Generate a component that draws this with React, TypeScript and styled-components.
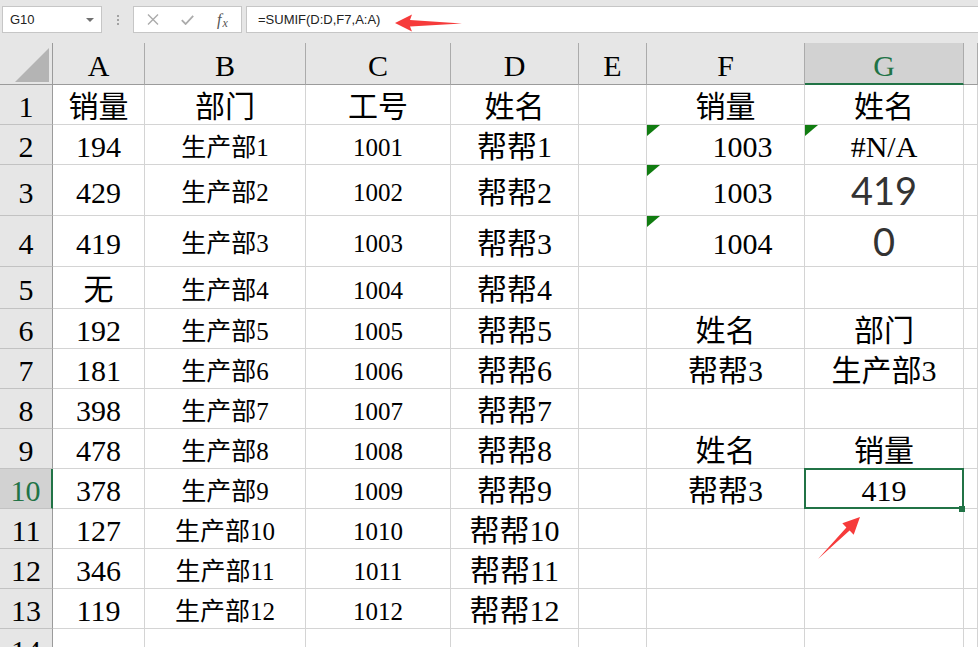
import React from "react";
import styled, { createGlobalStyle, css } from "styled-components";

const GREEN = "#217346";

const Global = createGlobalStyle`
  html, body { margin: 0; padding: 0; background: #fff; overflow: hidden; }
  #root { width: 978px; height: 647px; }
`;

const Page = styled.div`
  position: relative;
  width: 978px;
  height: 647px;
  overflow: hidden;
  background: #fff;
  font-family: "Liberation Serif", "Noto Sans CJK SC", serif;
`;

/* ---------- formula bar ---------- */
const TopBar = styled.div`
  height: 43px;
  box-sizing: border-box;
  background: #e6e6e6;
  display: flex;
  align-items: flex-start;
  padding: 6px 0 0 2px;
  font-family: "Liberation Sans", "Noto Sans CJK SC", sans-serif;
  font-size: 13px;
  color: #222;
`;

const Box = styled.div`
  height: 27px;
  box-sizing: border-box;
  background: #fff;
  border: 1px solid #c6c6c6;
  display: flex;
  align-items: center;
`;

const NameBox = styled(Box)`
  width: 100px;
  padding: 0 7px 0 7px;
  justify-content: space-between;
`;

const Caret = styled.span`
  width: 0;
  height: 0;
  border-left: 4px solid transparent;
  border-right: 4px solid transparent;
  border-top: 4px solid #707070;
  margin-top: 1px;
`;

const Dots = styled.div`
  width: 31px;
  height: 27px;
  display: flex;
  flex-direction: column;
  align-items: center;
  justify-content: center;
  gap: 2px;
`;

const Dot = styled.span`
  width: 2px;
  height: 2px;
  background: #a2a2a2;
`;

const FxBox = styled(Box)`
  width: 109px;
  padding-left: 1px;
`;

const FxSlot = styled.div`
  width: 36px;
  height: 100%;
  display: flex;
  align-items: center;
  justify-content: center;
`;

const FxText = styled.span`
  font-family: "Liberation Serif", serif;
  font-style: italic;
  color: #555;
  font-size: 16px;
  line-height: 1;
  margin-left: -2px;
  & > span {
    font-size: 12px;
    position: relative;
    top: 2px;
    margin-left: 1px;
  }
`;

const FormulaBox = styled(Box)`
  flex: 1;
  margin-left: 4px;
  margin-right: -2px;
  padding-left: 11px;
  color: #222;
`;

/* ---------- sheet ---------- */
const ROW_HEIGHTS = [42, 40, 40, 51, 51, 42, 40, 40, 40, 40, 40, 40, 40, 40, 40];

const Sheet = styled.div`
  display: grid;
  grid-template-columns: 53px 92px 161px 145px 128px 68px 158px 159px 1fr;
  grid-template-rows: ${ROW_HEIGHTS.map((h) => `${h}px`).join(" ")};
`;

const Corner = styled.div`
  box-sizing: border-box;
  background: #e6e6e6;
  border-right: 1px solid #9b9b9b;
  border-bottom: 1px solid #9b9b9b;
  & > svg { display: block; }
`;

const ColHead = styled.div<{ $active?: boolean }>`
  box-sizing: border-box;
  background: ${(p) => (p.$active ? "#d2d2d2" : "#e6e6e6")};
  border-right: 1px solid #ababab;
  border-bottom: ${(p) => (p.$active ? `2px solid ${GREEN}` : "1px solid #9b9b9b")};
  color: ${(p) => (p.$active ? GREEN : "#000")};
  display: flex;
  align-items: center;
  justify-content: center;
  padding-top: ${(p) => (p.$active ? 6 : 5)}px;
  font-size: 30px;
  line-height: 1;
`;

const RowHead = styled.div<{ $active?: boolean }>`
  box-sizing: border-box;
  background: ${(p) => (p.$active ? "#d2d2d2" : "#e6e6e6")};
  border-right: ${(p) => (p.$active ? `2px solid ${GREEN}` : "1px solid #9b9b9b")};
  border-bottom: 1px solid #c2c2c2;
  color: ${(p) => (p.$active ? GREEN : "#000")};
  display: flex;
  align-items: center;
  justify-content: center;
  padding-top: 5px;
  font-size: 30px;
  line-height: 1;
  white-space: nowrap;
`;

const Cell = styled.div<{ $size: number; $sans?: boolean; $indent?: number; $selected?: boolean }>`
  position: relative;
  box-sizing: border-box;
  border-right: 1px solid #d4d4d4;
  border-bottom: 1px solid #d4d4d4;
  display: flex;
  align-items: center;
  justify-content: center;
  padding-top: ${(p) => (p.$sans ? 0 : 5)}px;
  padding-left: ${(p) => p.$indent ?? 0}px;
  font-size: ${(p) => p.$size}px;
  line-height: 1;
  white-space: nowrap;
  color: #000;
  ${(p) =>
    p.$sans &&
    css`
      font-family: Lato, "Liberation Sans", sans-serif;
      font-size: 38px;
      color: #333;
    `}
  ${(p) =>
    p.$selected &&
    css`
      &::after {
        content: "";
        position: absolute;
        top: -1px;
        left: -1px;
        right: -1px;
        bottom: -1px;
        border: 2px solid ${GREEN};
        pointer-events: none;
      }
    `}
`;

const Handle = styled.span`
  position: absolute;
  right: -2px;
  bottom: -4px;
  width: 6px;
  height: 6px;
  background: ${GREEN};
  z-index: 2;
`;

const ErrorMark = styled.span`
  position: absolute;
  top: 0;
  left: 0;
  width: 0;
  height: 0;
  border-top: 11px solid #107c10;
  border-right: 13px solid transparent;
`;

const Annotations = styled.svg`
  position: absolute;
  top: 0;
  left: 0;
  pointer-events: none;
  z-index: 5;
`;

/* ---------- data ---------- */
type Spec = string | { t: string; sans?: boolean; tri?: boolean; indent?: number };

const COLS = ["A", "B", "C", "D", "E", "F", "G", ""];
const SIZES = [30, 25, 25, 30, 30, 30, 30, 30];

const f = (t: string): Spec => ({ t, tri: true, indent: 34 });

const DATA: Spec[][] = [
  ["销量", "部门", "工号", "姓名", "", "销量", "姓名", ""],
  ["194", "生产部1", "1001", "帮帮1", "", f("1003"), { t: "#N/A", tri: true }, ""],
  ["429", "生产部2", "1002", "帮帮2", "", f("1003"), { t: "419", sans: true }, ""],
  ["419", "生产部3", "1003", "帮帮3", "", f("1004"), { t: "0", sans: true }, ""],
  ["无", "生产部4", "1004", "帮帮4", "", "", "", ""],
  ["192", "生产部5", "1005", "帮帮5", "", "姓名", "部门", ""],
  ["181", "生产部6", "1006", "帮帮6", "", "帮帮3", "生产部3", ""],
  ["398", "生产部7", "1007", "帮帮7", "", "", "", ""],
  ["478", "生产部8", "1008", "帮帮8", "", "姓名", "销量", ""],
  ["378", "生产部9", "1009", "帮帮9", "", "帮帮3", "419", ""],
  ["127", "生产部10", "1010", "帮帮10", "", "", "", ""],
  ["346", "生产部11", "1011", "帮帮11", "", "", "", ""],
  ["119", "生产部12", "1012", "帮帮12", "", "", "", ""],
  ["", "", "", "", "", "", "", ""],
];

const ACTIVE_ROW = 9;
const ACTIVE_COL = 6;

export default function App() {
  return (
    <Page>
      <Global />
      <TopBar>
        <NameBox>
          <span>G10</span>
          <Caret />
        </NameBox>
        <Dots>
          <Dot />
          <Dot />
          <Dot />
        </Dots>
        <FxBox>
          <FxSlot>
            <svg width="12" height="11" viewBox="0 0 12 11">
              <path d="M1 0.5 L11 10.5 M11 0.5 L1 10.5" stroke="#ababab" strokeWidth="1.4" fill="none" />
            </svg>
          </FxSlot>
          <FxSlot>
            <svg width="13" height="10" viewBox="0 0 13 10">
              <path d="M0.8 5.2 L4.6 9 L12.2 0.8" stroke="#ababab" strokeWidth="1.8" fill="none" />
            </svg>
          </FxSlot>
          <FxSlot>
            <FxText>
              f<span>x</span>
            </FxText>
          </FxSlot>
        </FxBox>
        <FormulaBox>=SUMIF(D:D,F7,A:A)</FormulaBox>
      </TopBar>

      <Sheet>
        <Corner>
          <svg width="52" height="41" viewBox="0 0 52 41">
            <polygon points="15,39 49,39 49,5" fill="#b4b4b4" />
          </svg>
        </Corner>
        {COLS.map((c, i) => (
          <ColHead key={`h${i}`} $active={i === ACTIVE_COL}>
            {c}
          </ColHead>
        ))}
        {DATA.map((row, r) => (
          <React.Fragment key={`r${r}`}>
            <RowHead $active={r === ACTIVE_ROW}>{r + 1}</RowHead>
            {row.map((spec, c) => {
              const s = typeof spec === "string" ? { t: spec } : spec;
              const selected = r === ACTIVE_ROW && c === ACTIVE_COL;
              return (
                <Cell
                  key={`c${r}-${c}`}
                  $size={r === 0 ? 30 : SIZES[c]}
                  $sans={"sans" in s ? s.sans : false}
                  $indent={"indent" in s ? s.indent : 0}
                  $selected={selected}
                >
                  {"tri" in s && s.tri ? <ErrorMark /> : null}
                  {s.t}
                  {selected ? <Handle /> : null}
                </Cell>
              );
            })}
          </React.Fragment>
        ))}
      </Sheet>

      <Annotations width="978" height="647" viewBox="0 0 978 647">
        <polygon
          points="395,23 412,14.5 410,20 462,23.5 410,26.5 412,31.5"
          fill="#f63b3b"
        />
        <polygon
          points="860,517 842.3,523.3 846.4,527.4 818,559 849.6,530.6 853.7,534.7"
          fill="#f63b3b"
        />
      </Annotations>
    </Page>
  );
}
